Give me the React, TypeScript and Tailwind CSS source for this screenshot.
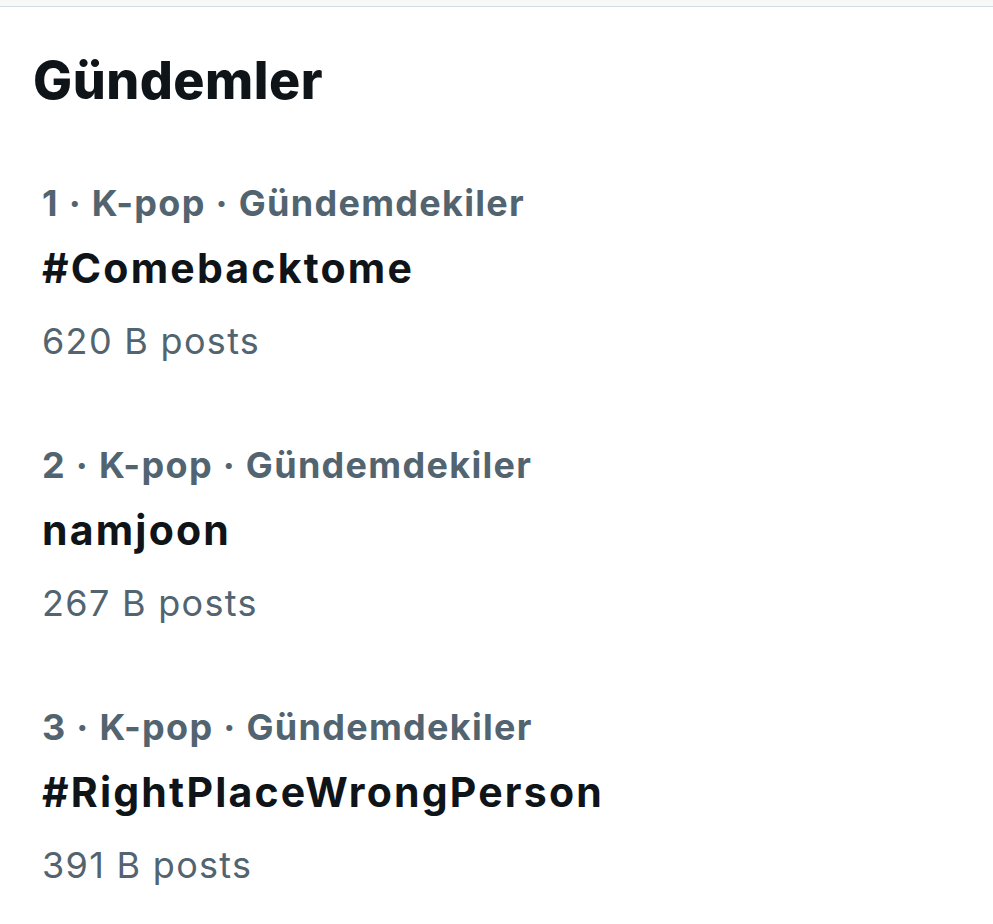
import React from "react";

const trends = [
  { rank: 1, name: "#Comebacktome", posts: "620 B posts" },
  { rank: 2, name: "namjoon", posts: "267 B posts" },
  { rank: 3, name: "#RightPlaceWrongPerson", posts: "391 B posts" },
];

export default function App() {
  return (
    <div className="min-h-[924px] w-full bg-white" style={{ fontFamily: "Inter, 'Noto Sans', sans-serif" }}>
      <div className="h-[6px] bg-[#f7f9f9]" />
      <div className="h-px bg-[#d5dce0]" />
      <div className="pt-[44px]">
        <h2 className="pl-[33px] text-[52px] leading-[60px] font-extrabold text-[#0f1419] tracking-[0.5px]">
          Gündemler
        </h2>
        <div className="mt-[60px] flex flex-col gap-[52px] pl-[42px]">
          {trends.map((t) => (
            <div key={t.rank} className="flex flex-col">
              <div className="text-[36px] leading-[64px] font-bold text-[#536471] tracking-[1.3px]">
                {t.rank} · K-pop · Gündemdekiler
              </div>
              <div className="text-[41px] leading-[66px] font-bold text-[#0f1419] tracking-[2.2px]">{t.name}</div>
              <div className="text-[36px] leading-[80px] font-normal text-[#536471] tracking-[1.3px]">{t.posts}</div>
            </div>
          ))}
        </div>
      </div>
    </div>
  );
}
